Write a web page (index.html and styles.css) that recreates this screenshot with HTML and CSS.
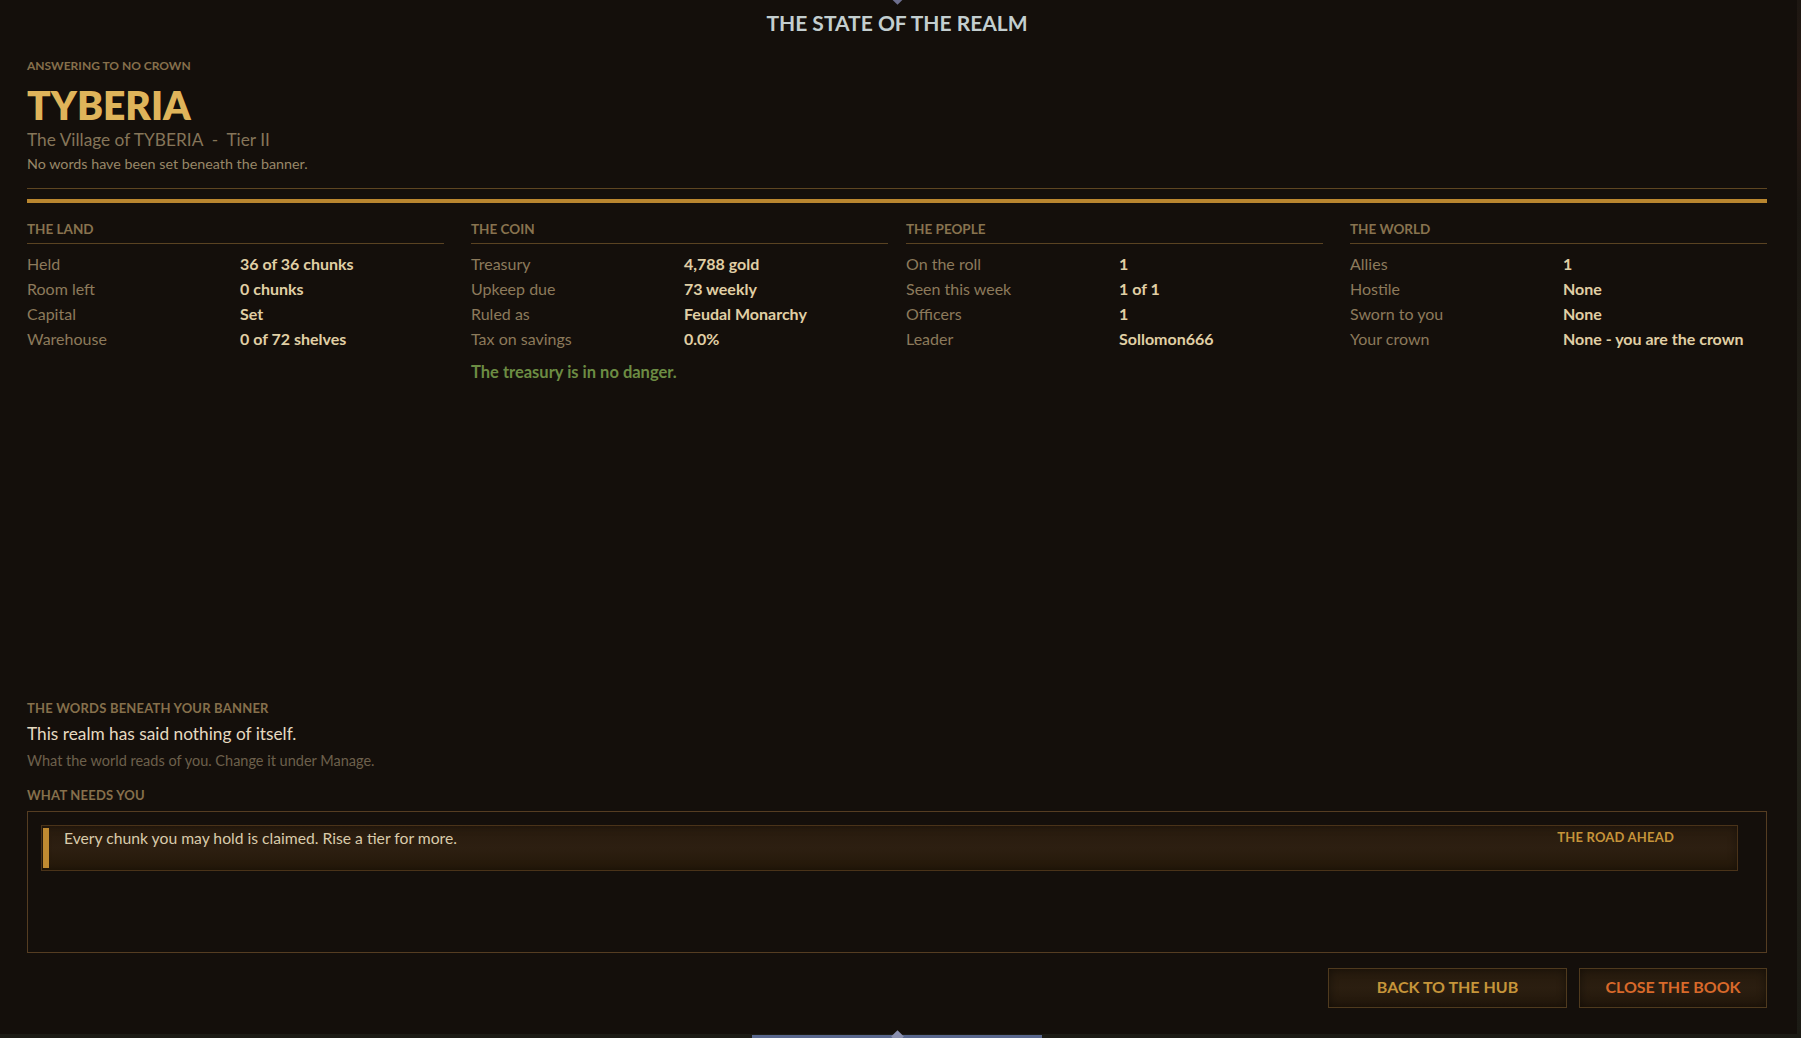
FILE: index.html
```html
<!DOCTYPE html>
<html lang="en">
<head>
    <meta charset="UTF-8">
    <meta name="viewport" content="width=device-width, initial-scale=1.0">
    <title>The State of the Realm</title>
    <link rel="stylesheet" href="styles.css">
</head>
<body>
    <div class="frame">
        <div class="panel">
            <span class="gem gem-top"></span>
            <h1 class="book-title">THE STATE OF THE REALM</h1>

            <div class="realm-head">
                <div class="eyebrow">ANSWERING TO NO CROWN</div>
                <div class="realm-name">TYBERIA</div>
                <div class="realm-sub">The Village of TYBERIA &nbsp;-&nbsp; Tier II</div>
                <div class="realm-motto">No words have been set beneath the banner.</div>
            </div>

            <div class="rule-thin"></div>
            <div class="rule-thick"></div>

            <div class="stats">
                <div class="stat-col">
                    <div class="stat-head">THE LAND</div>
                    <div class="stat-rows">
                        <span class="label">Held</span><span class="value">36 of 36 chunks</span>
                        <span class="label">Room left</span><span class="value">0 chunks</span>
                        <span class="label">Capital</span><span class="value">Set</span>
                        <span class="label">Warehouse</span><span class="value">0 of 72 shelves</span>
                    </div>
                </div>
                <div class="stat-col">
                    <div class="stat-head">THE COIN</div>
                    <div class="stat-rows">
                        <span class="label">Treasury</span><span class="value">4,788 gold</span>
                        <span class="label">Upkeep due</span><span class="value">73 weekly</span>
                        <span class="label">Ruled as</span><span class="value">Feudal Monarchy</span>
                        <span class="label">Tax on savings</span><span class="value">0.0%</span>
                    </div>
                    <div class="safe-note">The treasury is in no danger.</div>
                </div>
                <div class="stat-col">
                    <div class="stat-head">THE PEOPLE</div>
                    <div class="stat-rows">
                        <span class="label">On the roll</span><span class="value">1</span>
                        <span class="label">Seen this week</span><span class="value">1 of 1</span>
                        <span class="label">Officers</span><span class="value">1</span>
                        <span class="label">Leader</span><span class="value">Sollomon666</span>
                    </div>
                </div>
                <div class="stat-col">
                    <div class="stat-head">THE WORLD</div>
                    <div class="stat-rows">
                        <span class="label">Allies</span><span class="value">1</span>
                        <span class="label">Hostile</span><span class="value">None</span>
                        <span class="label">Sworn to you</span><span class="value">None</span>
                        <span class="label">Your crown</span><span class="value">None - you are the crown</span>
                    </div>
                </div>
            </div>

            <div class="lower">
                <div class="section-head">THE WORDS BENEATH YOUR BANNER</div>
                <div class="banner-words">This realm has said nothing of itself.</div>
                <div class="banner-hint">What the world reads of you. Change it under Manage.</div>

                <div class="section-head needs-head">WHAT NEEDS YOU</div>
                <div class="needs-box">
                    <div class="need-item">
                        <span class="need-bar"></span>
                        <span class="need-text">Every chunk you may hold is claimed. Rise a tier for more.</span>
                        <span class="need-tag">THE ROAD AHEAD</span>
                    </div>
                </div>

                <div class="actions">
                    <button class="btn btn-hub">BACK TO THE HUB</button>
                    <button class="btn btn-close">CLOSE THE BOOK</button>
                </div>
            </div>
        </div>
        <span class="bottom-bar"></span>
        <span class="gem gem-bottom"></span>
    </div>
</body>
</html>
```

FILE: styles.css
```css
html, body {
    margin: 0;
    padding: 0;
}
body {
    font-family: Lato, "Open Sans", sans-serif;
    background: linear-gradient(180deg, #1d1712 0%, #2a1a14 10%, #1b1712 20%, #26261c 60%, #1c1b15 100%);
    width: 1801px;
    height: 1038px;
    overflow: hidden;
}
.frame {
    position: relative;
    width: 1801px;
    height: 1038px;
}
.panel {
    position: relative;
    box-sizing: border-box;
    width: 1797px;
    height: 1034px;
    background: #140f0b;
    padding: 10px 30px 0 27px;
    display: flex;
    flex-direction: column;
}
.gem {
    position: absolute;
    width: 9px;
    height: 9px;
    background: #6d6f8e;
    transform: rotate(45deg);
}
.gem-top {
    left: 893px;
    top: -6px;
}
.gem-bottom {
    left: 893px;
    top: 1032px;
    background: #8a8fae;
}
.bottom-bar {
    position: absolute;
    left: 752px;
    top: 1035px;
    width: 290px;
    height: 3px;
    background: #59678e;
}
.book-title {
    margin: 0;
    text-align: center;
    font-size: 21px;
    line-height: 25px;
    font-weight: 700;
    letter-spacing: 0;
    color: #c3cecf;
}

/* header */
.realm-head {
    margin-top: 23px;
}
.eyebrow {
    font-size: 12px;
    line-height: 16px;
    font-weight: 700;
    color: #86704c;
}
.realm-name {
    margin-top: 9px;
    font-size: 39px;
    line-height: 44px;
    font-weight: 800;
    color: #dfb45a;
}
.realm-sub {
    margin-top: 3px;
    font-size: 17.3px;
    line-height: 20px;
    color: #857559;
}
.realm-motto {
    margin-top: 5px;
    font-size: 14.3px;
    line-height: 18px;
    color: #988768;
}
.rule-thin {
    margin-top: 15px;
    height: 1px;
    background: #5e4622;
}
.rule-thick {
    margin-top: 10px;
    height: 4px;
    background: #b9862f;
}

/* stat columns */
.stats {
    margin-top: 17px;
    display: grid;
    grid-template-columns: 444px 435px 444px 1fr;
}
.stat-col {
    margin-right: 27px;
}
.stat-col:nth-child(2) {
    margin-right: 18px;
}
.stat-col:last-child {
    margin-right: 0;
}
.stat-head {
    font-size: 13.5px;
    line-height: 18px;
    font-weight: 700;
    color: #88734f;
    padding-bottom: 5px;
    border-bottom: 1px solid #5a4322;
}
.stat-rows {
    margin-top: 7px;
    display: grid;
    grid-template-columns: 1fr 1fr;
    column-gap: 9px;
}
.label,
.value {
    font-size: 16px;
    line-height: 25px;
    white-space: nowrap;
}
.label {
    color: #8c7a5b;
}
.value {
    font-weight: 700;
    color: #e0cfa5;
}
.safe-note {
    margin-top: 9px;
    font-size: 16.5px;
    line-height: 25px;
    font-weight: 700;
    color: #6c8c43;
}

/* lower half */
.lower {
    margin-top: auto;
    padding-bottom: 26px;
}
.section-head {
    font-size: 13px;
    line-height: 16px;
    font-weight: 700;
    letter-spacing: 0.2px;
    color: #86704c;
}
.banner-words {
    margin-top: 6px;
    font-size: 17.3px;
    line-height: 24px;
    color: #e6dac0;
}
.banner-hint {
    margin-top: 5px;
    font-size: 14.5px;
    line-height: 20px;
    color: #6d604c;
}
.needs-head {
    margin-top: 16px;
}
.needs-box {
    margin-top: 8px;
    box-sizing: border-box;
    height: 142px;
    border: 1px solid #553d22;
    padding: 13px 28px 0 13px;
}
.need-item {
    box-sizing: border-box;
    height: 46px;
    display: flex;
    align-items: flex-start;
    border: 1px solid #4a3319;
    background: linear-gradient(180deg, #281b0e 0%, #2d1f11 50%, #241809 100%);
    box-shadow: inset 0 0 8px rgba(0, 0, 0, 0.35);
}
.need-bar {
    align-self: stretch;
    width: 6px;
    margin: 2px 0 2px 1px;
    background: #bf8a31;
}
.need-text {
    margin-left: 15px;
    padding-top: 2px;
    font-size: 15.7px;
    line-height: 20px;
    color: #d9cbab;
    flex: 1;
}
.need-tag {
    margin-right: 63px;
    padding-top: 3px;
    font-size: 13px;
    line-height: 16px;
    font-weight: 700;
    letter-spacing: 0.2px;
    color: #c6943a;
}
.actions {
    margin-top: 15px;
    display: flex;
    justify-content: flex-end;
    gap: 12px;
}
.btn {
    height: 40px;
    padding: 0 0 3px;
    font-family: Lato, "Open Sans", sans-serif;
    font-size: 16px;
    font-weight: 700;
    background: linear-gradient(180deg, #261a0d 0%, #2b1e10 50%, #22170b 100%);
    border: 1px solid #4f3a1e;
    box-shadow: inset 0 0 10px rgba(0, 0, 0, 0.45);
    cursor: pointer;
}
.btn-hub {
    width: 239px;
    color: #c6953a;
}
.btn-close {
    width: 188px;
    color: #d8692a;
}
```
